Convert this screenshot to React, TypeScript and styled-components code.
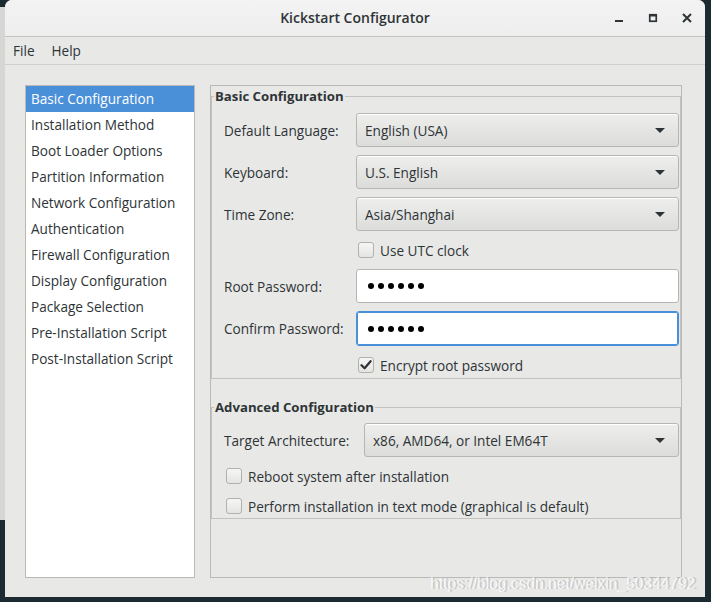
import React from "react";
import styled, { createGlobalStyle } from "styled-components";

const Global = createGlobalStyle`
  html, body { margin: 0; padding: 0; }
  body { font-family: "Open Sans", "DejaVu Sans", sans-serif; }
  * { box-sizing: border-box; }
`;

const FONT = `"Open Sans", "DejaVu Sans", sans-serif`;
const TEXT = "#2e3436";
const BORDER = "#b9b9b6";
const FS = "13.6px";

const Page = styled.div`
  position: relative;
  display: flex;
  align-items: flex-start;
  width: 711px;
  height: 602px;
  overflow: hidden;
  background: #1c2b32;
  font-family: ${FONT};
  color: ${TEXT};
`;

const BackWindow = styled.div`
  flex: 0 0 5px;
  height: 513px;
  margin-top: 7px;
  background: #d6d6d4;
`;

const Window = styled.div`
  flex: 0 0 700px;
  height: 597px;
  display: flex;
  flex-direction: column;
  background: #e8e8e7;
  border-radius: 7px 7px 0 0;
  overflow: hidden;
`;

const TitleBar = styled.div`
  flex: 0 0 37px;
  display: grid;
  grid-template-columns: 1fr auto 1fr;
  align-items: center;
  background: linear-gradient(#f3f3f3, #eeeeee);
  border-bottom: 1px solid #c3c3c1;
`;

const Title = styled.div`
  grid-column: 2;
  font-size: 14px;
  font-weight: 600;
  color: #2e3436;
  padding-bottom: 1px;
`;

const Controls = styled.div`
  grid-column: 3;
  justify-self: end;
  display: flex;
  gap: 14px;
  padding-right: 8px;
`;

const CtrlButton = styled.div`
  width: 20px;
  height: 20px;
  display: flex;
  align-items: center;
  justify-content: center;
`;

const MenuBar = styled.div`
  flex: 0 0 28px;
  display: flex;
  align-items: center;
  gap: 17px;
  padding-left: 8px;
  border-bottom: 1px solid #d0d0ce;
  font-size: ${FS};
`;

const MenuItem = styled.span`
  color: ${TEXT};
`;

const Content = styled.div`
  flex: 1;
  display: flex;
  gap: 15px;
  padding: 20px 23px 19px 20px;
  min-height: 0;
`;

const Sidebar = styled.div`
  flex: 0 0 170px;
  background: #ffffff;
  border: 1px solid ${BORDER};
  display: flex;
  flex-direction: column;
`;

const NavItem = styled.div<{ $active?: boolean }>`
  height: 26px;
  line-height: 26px;
  padding-left: 5px;
  font-size: ${FS};
  white-space: nowrap;
  background: ${(p) => (p.$active ? "#4a90d9" : "transparent")};
  color: ${(p) => (p.$active ? "#ffffff" : TEXT)};
`;

const Panel = styled.div`
  flex: 1;
  border: 1px solid ${BORDER};
  display: flex;
  flex-direction: column;
`;

const Frame = styled.fieldset<{ $gapTop?: number }>`
  margin: ${(p) => p.$gapTop ?? 2}px 0 0 0;
  padding: 0;
  border: 1px solid #c2c2bf;
  min-width: 0;
`;

const Legend = styled.legend`
  margin-left: 2px;
  padding: 0 1px;
  font-size: 13.2px;
  font-weight: 700;
  line-height: 17px;
  color: ${TEXT};
`;

const FormGrid = styled.div<{ $labelCol: number; $pad: string }>`
  display: grid;
  grid-template-columns: ${(p) => p.$labelCol}px 1fr;
  row-gap: 8px;
  align-items: center;
  padding: ${(p) => p.$pad};
`;

const Label = styled.div`
  font-size: ${FS};
  color: ${TEXT};
  white-space: nowrap;
`;

const Combo = styled.div`
  grid-column: 2;
  height: 34px;
  display: flex;
  align-items: center;
  justify-content: space-between;
  padding: 0 13px 0 8px;
  border: 1px solid #b6b6b3;
  border-radius: 3px;
  background: linear-gradient(#eeeeec, #dcdcda);
  box-shadow: inset 0 1px #ffffff;
  font-size: ${FS};
  color: ${TEXT};
`;

const Arrow = styled.span`
  width: 0;
  height: 0;
  border-left: 5px solid transparent;
  border-right: 5px solid transparent;
  border-top: 5px solid #2e3436;
`;

const Entry = styled.div<{ $focused?: boolean }>`
  grid-column: 2;
  height: ${(p) => (p.$focused ? 35 : 34)}px;
  display: flex;
  align-items: center;
  gap: 4px;
  padding-left: 11px;
  background: #ffffff;
  border: 1px solid ${(p) => (p.$focused ? "#4a90d9" : "#b6b6b3")};
  border-radius: 3px;
  box-shadow: ${(p) => (p.$focused ? "inset 0 0 0 1px #4a90d9" : "none")};
`;

const Dot = styled.span`
  width: 6px;
  height: 6px;
  border-radius: 50%;
  background: #000000;
`;

const CheckRow = styled.label<{ $span?: boolean; $indent?: number }>`
  grid-column: ${(p) => (p.$span ? "1 / span 2" : "2")};
  height: 22px;
  display: flex;
  align-items: center;
  gap: 6px;
  padding-left: ${(p) => p.$indent ?? 2}px;
  font-size: ${FS};
  color: ${TEXT};
`;

const Box = styled.span`
  width: 16px;
  height: 16px;
  display: flex;
  align-items: center;
  justify-content: center;
  border: 1px solid #b0b0ad;
  border-radius: 3px;
  background: linear-gradient(#f6f6f5, #e4e4e2);
`;

const Spacer = styled.div`
  flex: 1;
`;

const Watermark = styled.div`
  position: absolute;
  left: 430px;
  top: 575px;
  font-family: "Liberation Sans", Arial, sans-serif;
  font-size: 15.6px;
  color: rgba(255, 255, 255, 0.7);
  text-shadow: 2px 0 rgba(170, 170, 170, 0.55);
  white-space: nowrap;
  pointer-events: none;
`;

const navItems = [
  "Basic Configuration",
  "Installation Method",
  "Boot Loader Options",
  "Partition Information",
  "Network Configuration",
  "Authentication",
  "Firewall Configuration",
  "Display Configuration",
  "Package Selection",
  "Pre-Installation Script",
  "Post-Installation Script",
];

const Check = () => (
  <svg width="12" height="12" viewBox="0 0 12 12">
    <path d="M1.5 6.2 L4.6 9.3 L10.6 2.2" fill="none" stroke="#2e3436" strokeWidth="2.2" strokeLinecap="round" strokeLinejoin="round" />
  </svg>
);

const CheckBox = ({ checked }: { checked?: boolean }) => <Box>{checked ? <Check /> : null}</Box>;

const Password = () => (
  <>
    {[0, 1, 2, 3, 4, 5].map((i) => (
      <Dot key={i} />
    ))}
  </>
);

export default function App() {
  return (
    <>
      <Global />
      <Page>
        <BackWindow />
        <Window>
          <TitleBar>
            <Title>Kickstart Configurator</Title>
            <Controls>
              <CtrlButton>
                <svg width="10" height="10" viewBox="0 0 10 10">
                  <rect x="1" y="7" width="8" height="2" fill="#2e3436" />
                </svg>
              </CtrlButton>
              <CtrlButton>
                <svg width="10" height="10" viewBox="0 0 10 10">
                  <rect x="1.75" y="1.75" width="6.5" height="6.5" fill="none" stroke="#2e3436" strokeWidth="1.7" />
                  <rect x="1" y="1" width="8" height="2.5" fill="#2e3436" />
                </svg>
              </CtrlButton>
              <CtrlButton>
                <svg width="10" height="10" viewBox="0 0 10 10">
                  <path d="M1 1 L9 9 M9 1 L1 9" stroke="#2e3436" strokeWidth="2" />
                </svg>
              </CtrlButton>
            </Controls>
          </TitleBar>
          <MenuBar>
            <MenuItem>File</MenuItem>
            <MenuItem>Help</MenuItem>
          </MenuBar>
          <Content>
            <Sidebar>
              {navItems.map((n, i) => (
                <NavItem key={n} $active={i === 0}>
                  {n}
                </NavItem>
              ))}
            </Sidebar>
            <Panel>
              <Frame>
                <Legend>Basic Configuration</Legend>
                <FormGrid $labelCol={132} $pad="8px 1px 2px 12px">
                  <Label>Default Language:</Label>
                  <Combo>
                    English (USA)
                    <Arrow />
                  </Combo>
                  <Label>Keyboard:</Label>
                  <Combo>
                    U.S. English
                    <Arrow />
                  </Combo>
                  <Label>Time Zone:</Label>
                  <Combo>
                    Asia/Shanghai
                    <Arrow />
                  </Combo>
                  <CheckRow>
                    <CheckBox />
                    Use UTC clock
                  </CheckRow>
                  <Label>Root Password:</Label>
                  <Entry>
                    <Password />
                  </Entry>
                  <Label>Confirm Password:</Label>
                  <Entry $focused>
                    <Password />
                  </Entry>
                  <CheckRow>
                    <CheckBox checked />
                    Encrypt root password
                  </CheckRow>
                </FormGrid>
              </Frame>
              <Frame $gapTop={20}>
                <Legend>Advanced Configuration</Legend>
                <FormGrid $labelCol={140} $pad="7px 1px 1px 12px">
                  <Label>Target Architecture:</Label>
                  <Combo>
                    x86, AMD64, or Intel EM64T
                    <Arrow />
                  </Combo>
                  <CheckRow $span>
                    <CheckBox />
                    Reboot system after installation
                  </CheckRow>
                  <CheckRow $span>
                    <CheckBox />
                    Perform installation in text mode (graphical is default)
                  </CheckRow>
                </FormGrid>
              </Frame>
              <Spacer />
            </Panel>
          </Content>
        </Window>
        <Watermark>https://blog.csdn.net/weixin_50344792</Watermark>
      </Page>
    </>
  );
}
